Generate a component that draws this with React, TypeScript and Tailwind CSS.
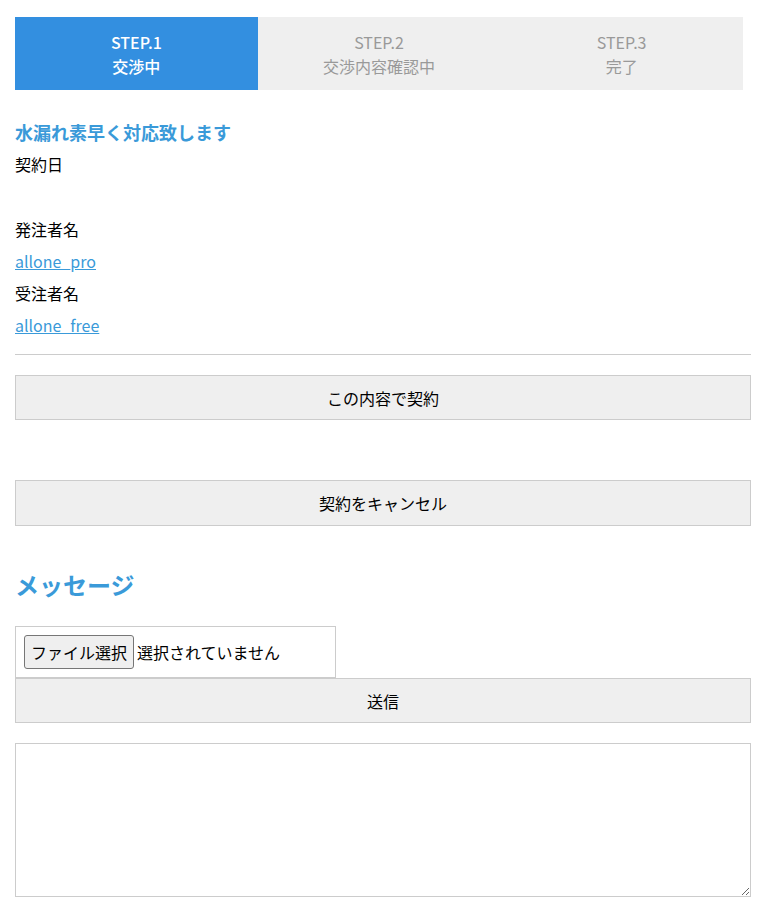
import React from "react";

const font = { fontFamily: '"Noto Sans CJK JP", "Noto Sans", sans-serif' };

function Step({ n, label, active }: { n: string; label: string; active?: boolean }) {
  return (
    <div
      className={`flex-1 flex flex-col items-center justify-center text-[16px] leading-[24px] ${
        active ? "bg-[#338fe0] text-white font-medium" : "bg-[#efefef] text-[#999999]"
      }`}
    >
      <div>{n}</div>
      <div>{label}</div>
    </div>
  );
}

export default function App() {
  return (
    <div className="bg-white min-h-[916px] px-[15px] pt-[17px] text-black" style={font}>
      <div className="flex w-[728px] h-[73px]">
        <Step n="STEP.1" label="交渉中" active />
        <Step n="STEP.2" label="交渉内容確認中" />
        <Step n="STEP.3" label="完了" />
      </div>

      <h2 className="mt-[28px] text-[18px] leading-[28px] font-bold text-[#3a9ad9]">水漏れ素早く対応致します</h2>
      <div className="text-[16px] mt-[2px]">
        <div className="h-[32px] leading-[32px]">契約日</div>
        <div className="h-[32px]"></div>
        <div className="h-[32px] leading-[32px] mt-[1px]">発注者名</div>
        <div className="h-[32px] leading-[32px]">
          <a href="#" className="text-[#3a9ad9] underline">allone_pro</a>
        </div>
        <div className="h-[32px] leading-[32px]">受注者名</div>
        <div className="h-[32px] leading-[32px]">
          <a href="#" className="text-[#3a9ad9] underline">allone_free</a>
        </div>
      </div>

      <hr className="mt-[13px] border-t border-[#cccccc]" />

      <button className="mt-[20px] w-full h-[45px] bg-[#efefef] border border-[#cccccc] text-[16px] text-black">
        この内容で契約
      </button>

      <button className="mt-[60px] w-full h-[46px] bg-[#efefef] border border-[#cccccc] text-[16px] text-black">
        契約をキャンセル
      </button>

      <h2 className="mt-[43px] text-[24px] leading-[32px] font-bold text-[#3a9ad9]">メッセージ</h2>

      <div className="mt-[25px] w-[321px] h-[52px] border border-[#cccccc] flex items-center pl-[8px] text-[16px]">
        <button className="h-[34px] px-[6px] bg-[#efefef] border border-[#767676] rounded-[3px] text-[16px] text-black">
          ファイル選択
        </button>
        <span className="ml-[3px]">選択されていません</span>
      </div>
      <button className="w-full h-[45px] bg-[#efefef] border border-[#cccccc] text-[16px] text-black">
        送信
      </button>

      <textarea className="block mt-[20px] w-full h-[154px] border border-[#cccccc] resize-y" />
    </div>
  );
}
